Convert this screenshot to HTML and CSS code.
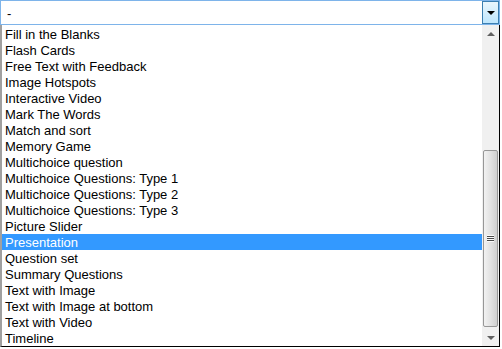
FILE: index.html
```html
<!DOCTYPE html>
<html lang="en">
<head>
    <meta charset="UTF-8">
    <title>Content type</title>
    <link rel="stylesheet" href="styles.css">
</head>
<body>
    <div class="select">
        <span class="value">-</span>
        <span class="arrow-btn"><span class="tri-down"></span></span>
    </div>
    <div class="dropdown">
        <ul class="options">
            <li>Fill in the Blanks</li>
            <li>Flash Cards</li>
            <li>Free Text with Feedback</li>
            <li>Image Hotspots</li>
            <li>Interactive Video</li>
            <li>Mark The Words</li>
            <li>Match and sort</li>
            <li>Memory Game</li>
            <li>Multichoice question</li>
            <li>Multichoice Questions: Type 1</li>
            <li>Multichoice Questions: Type 2</li>
            <li>Multichoice Questions: Type 3</li>
            <li>Picture Slider</li>
            <li class="selected">Presentation</li>
            <li>Question set</li>
            <li>Summary Questions</li>
            <li>Text with Image</li>
            <li>Text with Image at bottom</li>
            <li>Text with Video</li>
            <li>Timeline</li>
        </ul>
        <div class="scrollbar">
            <div class="sb-btn"><span class="tri-up-small"></span></div>
            <div class="sb-track">
                <div class="thumb"><span class="grip"></span></div>
            </div>
            <div class="sb-btn"><span class="tri-down-small"></span></div>
        </div>
    </div>
</body>
</html>
```
FILE: styles.css
```css
body {
    margin: 0;
    padding: 0;
    background: #fff;
    font-family: "Liberation Sans", Arial, sans-serif;
    font-size: 13px;
    color: #000;
}
.select {
    width: 500px;
    height: 25px;
    box-sizing: border-box;
    border: 1px solid #7eb4ea;
    display: flex;
    align-items: center;
    justify-content: space-between;
}
.select .value {
    padding-left: 6px;
    padding-top: 1px;
}
.arrow-btn {
    width: 17px;
    height: 23px;
    box-sizing: border-box;
    border: 1px solid #3c7fb1;
    background: linear-gradient(#eaf6fd, #bee6fd);
    display: flex;
    align-items: center;
    justify-content: center;
}
.tri-down {
    width: 0;
    height: 0;
    border-left: 4px solid transparent;
    border-right: 4px solid transparent;
    border-top: 4px solid #000;
}
.dropdown {
    width: 500px;
    height: 322px;
    box-sizing: border-box;
    border-left: 2px solid #a0a0a0;
    border-right: 1px solid #000;
    border-bottom: 1px solid #000;
    display: flex;
}
.options {
    list-style: none;
    margin: 0;
    padding: 1px 0 0;
    flex: 1;
}
.options li {
    height: 16px;
    line-height: 18px;
    padding-left: 3px;
    white-space: nowrap;
}
.options li.selected {
    background: #3399ff;
    color: #fff;
}
.scrollbar {
    width: 17px;
    background: #f0f0f0;
    display: flex;
    flex-direction: column;
}
.sb-btn {
    height: 17px;
    display: flex;
    align-items: center;
    justify-content: center;
}
.tri-up-small {
    width: 0;
    height: 0;
    border-left: 4px solid transparent;
    border-right: 4px solid transparent;
    border-bottom: 4px solid #606060;
}
.tri-down-small {
    width: 0;
    height: 0;
    border-left: 4px solid transparent;
    border-right: 4px solid transparent;
    border-top: 4px solid #606060;
}
.sb-track {
    flex: 1;
    display: flex;
    flex-direction: column;
    justify-content: flex-end;
    padding-bottom: 2px;
}
.thumb {
    height: 177px;
    margin: 0 0 0 1px;
    width: 15px;
    box-sizing: border-box;
    border: 1px solid #979797;
    border-radius: 2px;
    background: linear-gradient(to right, #f2f2f2, #e2e2e2 50%, #cfcfcf);
    display: flex;
    align-items: center;
    justify-content: center;
}
.grip {
    width: 7px;
    height: 7px;
    background: repeating-linear-gradient(#fafafa 0, #fafafa 1px, #4a4a4a 1px, #4a4a4a 2px);
}
```
